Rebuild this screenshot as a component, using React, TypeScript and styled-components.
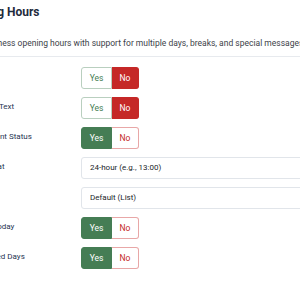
import styled, { createGlobalStyle } from "styled-components";

const GlobalStyle = createGlobalStyle`
  html, body {
    margin: 0;
    padding: 0;
    background: #ffffff;
    overflow: hidden;
  }

  body {
    font-family: Roboto, "Liberation Sans", sans-serif;
  }
`;

const IOptionsPage = styled.div`
  margin-left: -41px;
  width: 640px;
  padding-top: 5px;

  .title {
    margin: 0;
    font-size: 12px;
    line-height: 14px;
    font-weight: 700;
    color: #1e2b3c;
  }

  .description {
    margin: 18px 0 0 -7px;
    font-size: 8.5px;
    line-height: 12.75px;
    color: #3d4249;
  }
`;

const Fieldset = styled.div`
  margin-top: 6px;
  border-top: 1px solid #e7eaee;
  padding-top: 10px;
`;

const Row = styled.div`
  display: grid;
  grid-template-columns: 122px 1fr;
  align-items: center;
  height: 22px;
  margin-bottom: 8px;
`;

const Label = styled.label`
  font-size: 8px;
  color: #1f3553;
  margin-top: -2px;
`;

const Switcher = styled.div`
  display: flex;
  height: 22px;
`;

const SwitchBtn = styled.span<{ $kind: "yes" | "no"; $active: boolean }>`
  display: flex;
  align-items: center;
  justify-content: center;
  box-sizing: border-box;
  height: 22px;
  width: ${(p) => (p.$kind === "yes" ? "31px" : "27px")};
  font-size: 8.5px;
  border: 1px solid
    ${(p) =>
      p.$active
        ? p.$kind === "yes"
          ? "#457d54"
          : "#c52827"
        : p.$kind === "yes"
        ? "#b9cfbf"
        : "#e8a7a7"};
  background: ${(p) =>
    p.$active ? (p.$kind === "yes" ? "#457d54" : "#c52827") : "#ffffff"};
  color: ${(p) =>
    p.$active ? "#ffffff" : p.$kind === "yes" ? "#457d54" : "#c52827"};
  border-radius: ${(p) => (p.$kind === "yes" ? "3px 0 0 3px" : "0 3px 3px 0")};
  ${(p) => (p.$kind === "no" ? "border-left: none;" : "")}
`;

const Select = styled.div`
  display: flex;
  align-items: center;
  box-sizing: border-box;
  height: 22px;
  width: 400px;
  padding: 0 8px;
  font-size: 8px;
  color: #22262a;
  background: #ffffff;
  border: 1px solid #e1e5ea;
  border-radius: 3px;
`;

const YesNo = ({ value }: { value: boolean }) => (
  <Switcher>
    <SwitchBtn $kind="yes" $active={value}>
      Yes
    </SwitchBtn>
    <SwitchBtn $kind="no" $active={!value}>
      No
    </SwitchBtn>
  </Switcher>
);

const App = () => {
  return (
    <>
      <GlobalStyle />
      <IOptionsPage>
        <h2 className="title">Opening Hours</h2>
        <p className="description">
          Display business opening hours with support for multiple days, breaks, and special messages.
        </p>
        <Fieldset>
          <Row>
            <Label>Show Title</Label>
            <YesNo value={false} />
          </Row>
          <Row>
            <Label>Show Intro Text</Label>
            <YesNo value={false} />
          </Row>
          <Row>
            <Label>Show Current Status</Label>
            <YesNo value={true} />
          </Row>
          <Row>
            <Label>Time Format</Label>
            <Select>24-hour (e.g., 13:00)</Select>
          </Row>
          <Row>
            <Label>Layout</Label>
            <Select>Default (List)</Select>
          </Row>
          <Row>
            <Label>Highlight Today</Label>
            <YesNo value={true} />
          </Row>
          <Row>
            <Label>Show Closed Days</Label>
            <YesNo value={true} />
          </Row>
        </Fieldset>
      </IOptionsPage>
    </>
  );
};

export default App;
